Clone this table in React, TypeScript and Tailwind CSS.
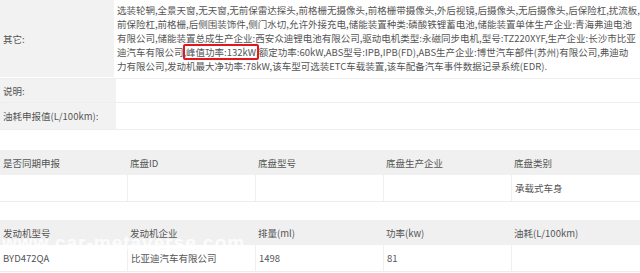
import React from "react";

const FONT = { fontFamily: '"Noto Sans CJK SC", "Noto Sans", sans-serif' };

function Cols({ cells, header }: { cells: string[]; header?: boolean }) {
  return (
    <div
      className={`grid grid-cols-[127px_128px_128px_128px_129px] ${
        header ? "h-[25px] bg-[#f0f0f0]" : "h-[27px] bg-white border-b border-[#ececec]"
      }`}
    >
      {cells.map((c, i) => (
        <div
          key={i}
          className={`flex items-center pl-[3px] whitespace-nowrap ${
            !header && i > 0 ? "border-l border-[#f0f0f0]" : ""
          }`}
        >
          {c}
        </div>
      ))}
    </div>
  );
}

export default function App() {
  const lines = [
    "选装轮辋,全景天窗,无天窗,无前保雷达探头,前格栅无摄像头,前格栅带摄像头,外后视镜,后摄像头,无后摄像头,后保险杠,扰流板,",
    "前保险杠,前格栅,后侧围装饰件,侧门水切,允许外接充电,储能装置种类:磷酸铁锂蓄电池,储能装置单体生产企业:青海弗迪电池",
    "有限公司,储能装置总成生产企业:西安众迪锂电池有限公司,驱动电机类型:永磁同步电机,型号:TZ220XYF,生产企业:长沙市比亚",
  ];
  return (
    <div
      className="w-[640px] h-[273px] overflow-hidden bg-white text-[#555] text-[9.5px] leading-[14px] relative"
      style={FONT}
    >
      {/* top table */}
      <div className="flex border-b border-[#eeeeee]">
        <div className="w-[116px] bg-[#f2f2f2] flex items-center pl-[3px] border-b border-white">其它:</div>
        <div className="flex-1 pl-[3px] pt-[3px] pb-[5px] whitespace-nowrap">
          {lines.map((l, i) => (
            <div key={i}>{l}</div>
          ))}
          <div>
            迪汽车有限公司,
            <span className="relative">
              峰值功率:132kW
              <span className="absolute left-[-3px] right-[-3px] top-[-1px] bottom-[-1px] border-2 border-[#e0181b] rounded-[2px]" />
            </span>
            ,额定功率:60kW,ABS型号:IPB,IPB(FD),ABS生产企业:博世汽车部件(苏州)有限公司,弗迪动
          </div>
          <div>力有限公司,发动机最大净功率:78kW,该车型可选装ETC车载装置,该车配备汽车事件数据记录系统(EDR).</div>
        </div>
      </div>
      <div className="flex h-[24px] border-b border-[#eeeeee]">
        <div className="w-[116px] bg-[#f2f2f2] flex items-center pl-[3px]">说明:</div>
        <div className="flex-1" />
      </div>
      <div className="flex h-[27px] border-b border-[#eeeeee]">
        <div className="w-[116px] bg-[#f2f2f2] flex items-center pl-[3px]">油耗申报值(L/100km):</div>
        <div className="flex-1" />
      </div>

      <div className="h-[20px]" />
      <Cols header cells={["是否同期申报", "底盘ID", "底盘型号", "底盘生产企业", "底盘类别"]} />
      <Cols cells={["", "", "", "", "承载式车身"]} />

      <div className="h-[18px]" />
      <Cols header cells={["发动机型号", "发动机企业", "排量(ml)", "功率(kw)", "油耗(L/100km)"]} />
      <Cols cells={["BYD472QA", "比亚迪汽车有限公司", "1498", "81", ""]} />

      <div
        className="absolute left-[2px] top-[233px] text-[19px] leading-[20px] font-bold tracking-[1px] text-white/80 whitespace-nowrap"
        style={{ fontFamily: '"Liberation Sans", sans-serif' }}
      >
        www.car-metaverse.com
      </div>
    </div>
  );
}
